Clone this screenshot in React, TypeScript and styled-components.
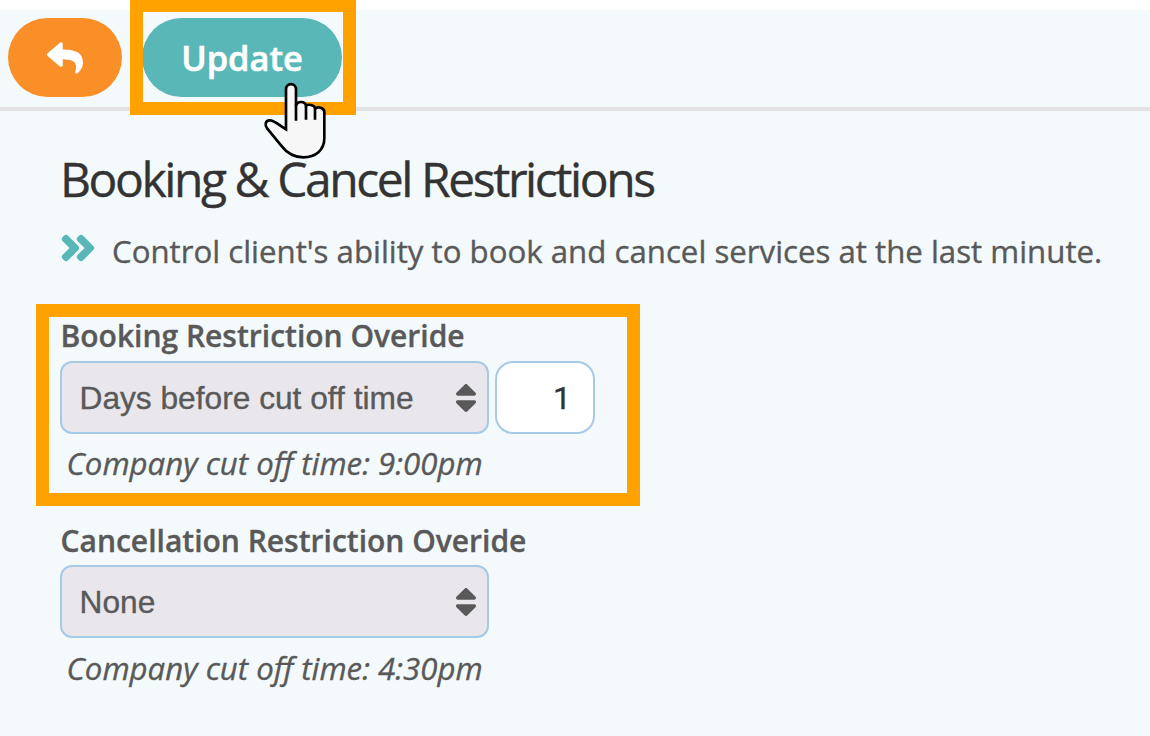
import React from "react";
import styled, { createGlobalStyle } from "styled-components";
import { FaReply, FaAngleDoubleRight, FaSort } from "react-icons/fa";

const GlobalStyle = createGlobalStyle`
  * { box-sizing: border-box; }
  body { margin: 0; background: #ffffff; overflow: hidden; }
`;

const Page = styled.div`
  width: 1150px;
  height: 736px;
  padding-top: 10px;
  display: flex;
  flex-direction: column;
  background: #ffffff;
  color: #595959;
  font-family: "Open Sans", sans-serif;
  -webkit-text-stroke: 0.35px currentColor;
  overflow: hidden;
`;

const Toolbar = styled.header`
  display: flex;
  align-items: flex-start;
  gap: 20px;
  height: 101px;
  padding: 8px 8px 0;
  background: #f4f9fc;
  border-bottom: 4px solid #e2e2e2;
`;

const PillButton = styled.button<{ $width: number; $color: string }>`
  display: flex;
  align-items: center;
  justify-content: center;
  width: ${(p) => p.$width}px;
  height: 79px;
  padding: 0;
  border: 0;
  border-radius: 40px;
  background: ${(p) => p.$color};
  color: #ffffff;
  font: 600 34.4px/79px "Open Sans", sans-serif;
  -webkit-text-stroke: 0.6px currentColor;
`;

const UpdateSlot = styled.div`
  position: relative;
  display: flex;
`;

const Highlight = styled.div<{ $top: number; $left: number; $width: number; $height: number }>`
  position: absolute;
  top: ${(p) => p.$top}px;
  left: ${(p) => p.$left}px;
  width: ${(p) => p.$width}px;
  height: ${(p) => p.$height}px;
  border: 13.4px solid #ffa200;
  pointer-events: none;
`;

const Pointer = styled.svg`
  position: absolute;
  left: 108px;
  top: 52px;
  width: 120px;
  height: 100px;
  z-index: 2;
  pointer-events: none;
`;

const Content = styled.main`
  flex: 1;
  display: flex;
  flex-direction: column;
  align-items: flex-start;
  padding: 35px 0 0 60px;
  background: #f4f9fc;
`;

const Title = styled.h1`
  margin: 0;
  font-size: 48px;
  line-height: 66px;
  font-weight: 400;
  letter-spacing: -2.43px;
  color: #333333;
  white-space: nowrap;
`;

const Intro = styled.p`
  display: flex;
  align-items: center;
  gap: 16px;
  height: 44px;
  margin: 17px 0 0;
  font-size: 31.22px;
  line-height: 44px;
  white-space: nowrap;
`;

const IntroMark = styled(FaAngleDoubleRight)`
  flex: none;
  width: 36px;
  height: 40px;
  margin-top: -7px;
  color: #5ab7b8;
  overflow: visible;

  path {
    stroke: #5ab7b8;
    stroke-width: 18px;
    stroke-linejoin: round;
  }
`;

const Field = styled.section<{ $gap: number }>`
  position: relative;
  margin-top: ${(p) => p.$gap}px;
  display: flex;
  flex-direction: column;
`;

const Label = styled.label<{ $line: number }>`
  height: 46px;
  padding-left: 0.5px;
  font-size: 30px;
  line-height: ${(p) => p.$line}px;
  font-weight: 600;
  white-space: nowrap;
`;

const Controls = styled.div`
  display: flex;
  gap: 6px;
`;

const SelectBox = styled.div`
  display: flex;
  align-items: center;
  justify-content: space-between;
  width: 429px;
  height: 73px;
  padding: 0 3px 0 17.5px;
  border: 2px solid #a6cae6;
  border-radius: 12px;
  background: #e9e7ec;
  font: 31.7px/70px "Liberation Sans", Arial, sans-serif;
  white-space: nowrap;
`;

const NumberBox = styled.div`
  width: 100px;
  height: 73px;
  padding-right: 22px;
  border: 2px solid #a6cae6;
  border-radius: 18px;
  background: #ffffff;
  color: #333333;
  font: 32px/70px Roboto, sans-serif;
  text-align: right;
`;

const Hint = styled.em<{ $line: number }>`
  padding-left: 6.5px;
  margin-top: 8px;
  font-size: 31.2px;
  line-height: ${(p) => p.$line}px;
  white-space: nowrap;
`;

function HandPointer() {
  return (
    <Pointer viewBox="0 0 360 300" aria-hidden="true">
      <path
        d="M108 178V58C108 37 138 37 138 58V107C142 92 165 93 168 107C173 102 194 104 196 116C202 109 223 112 223 126V205C223 240 197 262 160 262C132 262 109 247 93 226L52 176C43 164 46 152 59 151C72 150 83 163 108 178Z"
        fill="#f7f7f7"
        stroke="#000000"
        strokeWidth="8"
        strokeLinejoin="miter"
      />
      <path d="M138 104V152M168 107V149M195 115V149" fill="none" stroke="#000000" strokeWidth="8" />
    </Pointer>
  );
}

function Select({ value }: { value: string }) {
  return (
    <SelectBox>
      <span>{value}</span>
      <FaSort size={36} />
    </SelectBox>
  );
}

export default function App() {
  return (
    <Page>
      <GlobalStyle />
      <Toolbar>
        <PillButton $width={114} $color="#f98f26" aria-label="Back">
          <FaReply size={36} />
        </PillButton>
        <UpdateSlot>
          <PillButton $width={200} $color="#5ab7b8">Update</PillButton>
          <Highlight $top={-18.7} $left={-11.7} $width={225.2} $height={116} />
          <HandPointer />
        </UpdateSlot>
      </Toolbar>
      <Content>
        <Title>Booking &amp; Cancel Restrictions</Title>
        <Intro>
          <IntroMark />
          Control client's ability to book and cancel services at the last minute.
        </Intro>
        <Field $gap={42}>
          <Label $line={42}>Booking Restriction Overide</Label>
          <Controls>
            <Select value="Days before cut off time" />
            <NumberBox>1</NumberBox>
          </Controls>
          <Hint $line={43}>Company cut off time: 9:00pm</Hint>
          <Highlight $top={-10.6} $left={-23.6} $width={603.3} $height={201.3} />
        </Field>
        <Field $gap={34}>
          <Label $line={44}>Cancellation Restriction Overide</Label>
          <Controls>
            <Select value="None" />
          </Controls>
          <Hint $line={45}>Company cut off time: 4:30pm</Hint>
        </Field>
      </Content>
    </Page>
  );
}
